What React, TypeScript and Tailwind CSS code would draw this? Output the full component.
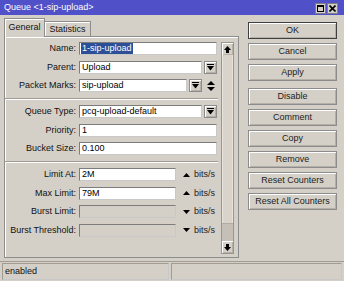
import React from "react";

const DropIcon = () => (
  <svg width="7" height="7" viewBox="0 0 7 7">
    <rect x="0" y="0" width="7" height="1" fill="#000" />
    <polygon points="0,2 7,2 3.5,6.5" fill="#000" />
  </svg>
);

const UpDown = () => (
  <svg width="8" height="10" viewBox="0 0 8 10">
    <polygon points="4,0 8,4 0,4" fill="#000" />
    <polygon points="0,6 8,6 4,10" fill="#000" />
  </svg>
);

const Tri = ({ up }: { up: boolean }) => (
  <svg width="7" height="4" viewBox="0 0 7 4">
    {up ? <polygon points="3.5,0 7,4 0,4" fill="#000" /> : <polygon points="0,0 7,0 3.5,4" fill="#000" />}
  </svg>
);

const ScrollArrow = ({ up }: { up: boolean }) => (
  <svg width="7" height="7" viewBox="0 0 7 7">
    {up ? (
      <>
        <polygon points="3.5,0 7,4 0,4" fill="#000" />
        <rect x="2" y="4" width="3" height="3" fill="#000" />
      </>
    ) : (
      <>
        <rect x="2" y="0" width="3" height="3" fill="#000" />
        <polygon points="0,3 7,3 3.5,7" fill="#000" />
      </>
    )}
  </svg>
);

const raised =
  "border border-[#8c8c8c] shadow-[inset_1px_1px_0_#ffffff,inset_-1px_-1px_0_#b4b0a8] bg-[#d4d0c8]";
const sunken =
  "border border-t-[#7c7c7c] border-l-[#7c7c7c] border-b-[#c8c8c8] border-r-[#c8c8c8]";

const Label = ({ text }: { text: string }) => (
  <div className="w-[72px] shrink-0 text-right pr-[1px] leading-[13px] text-[#111]">{text}</div>
);

const Input = ({ value, w, disabled }: { value?: string; w: string; disabled?: boolean }) => (
  <div className={`${w} h-[13px] ${sunken} ${disabled ? "bg-[#d4d0c8]" : "bg-white"} pl-[2px] leading-[11px] text-black`}>
    {value}
  </div>
);

const DropBtn = () => (
  <div className={`w-[13px] h-[13px] ${raised} flex items-center justify-center`}>
    <DropIcon />
  </div>
);

const Sep = () => <div className="h-[2px] border-t border-[#a09c94] border-b border-b-white mr-[3px]" />;

const Button = ({ text, primary }: { text: string; primary?: boolean }) => (
  <div
    className={`h-[17px] w-[89px] flex items-center justify-center border ${
      primary ? "border-[#404040]" : "border-[#8c8c8c]"
    } shadow-[inset_1px_1px_0_#ffffff,inset_-1px_-1px_0_#b4b0a8] text-[#222]`}
  >
    {text}
  </div>
);

export default function App() {
  return (
    <div className="w-[344px] h-[281px] bg-[#d4d0c8] flex flex-col overflow-hidden font-['Liberation_Sans',Arial,sans-serif] text-[9px]">
      <div className="h-[15px] shrink-0 bg-[#5050c8] flex items-center justify-between pl-[4px] pr-[6px] text-white">
        <span>Queue &lt;1-sip-upload&gt;</span>
        <div className="flex gap-[1px] pt-[1px]">
          <div className="w-[11px] h-[11px] bg-[#d4d0c8] border border-[#808080] flex items-center justify-center">
            <div className="w-[7px] h-[7px] border border-black border-t-2" />
          </div>
          <div className="w-[11px] h-[11px] bg-[#d4d0c8] border border-[#808080] flex items-center justify-center">
            <svg width="7" height="7" viewBox="0 0 7 7">
              <path d="M0.5 0.5 L6.5 6.5 M6.5 0.5 L0.5 6.5" stroke="#000" strokeWidth="1.6" />
            </svg>
          </div>
        </div>
      </div>

      <div className="flex flex-1 min-h-0">
        <div className="w-[239px] pl-[4px] pt-[3px] flex flex-col">
          <div className="flex items-end h-[19px]">
            <div className="w-[41px] h-[19px] border border-b-0 border-[#8c8c8c] shadow-[inset_1px_1px_0_#ffffff] flex items-center justify-center text-[#111] relative z-10 bg-[#d4d0c8]">
              General
            </div>
            <div className="w-[46px] h-[16px] border border-b-0 border-l-0 border-[#8c8c8c] shadow-[inset_1px_1px_0_#ffffff] flex items-center justify-center text-[#111]">
              Statistics
            </div>
          </div>
          <div className="w-[235px] h-[222px] -mt-[1px] border border-[#8c8c8c] shadow-[inset_1px_1px_0_#ffffff] flex pt-[5px] pb-[3px]">
            <div className="flex-1 flex flex-col gap-[5.5px]">
              <div className="flex items-center gap-[2px]">
                <Label text="Name:" />
                <div className={`w-[138px] h-[13px] ${sunken} bg-white pl-[1px] flex items-center`}>
                  <span className="bg-[#2c4f97] text-white leading-[11px] px-[1px]">1-sip-upload</span>
                </div>
              </div>
              <div className="flex items-center gap-[2px]">
                <Label text="Parent:" />
                <Input value="Upload" w="w-[123px]" />
                <DropBtn />
              </div>
              <div className="flex items-center gap-[2px]">
                <Label text="Packet Marks:" />
                <Input value="sip-upload" w="w-[108px]" />
                <DropBtn />
                <div className="ml-[3px] flex items-center">
                  <UpDown />
                </div>
              </div>
              <Sep />
              <div className="flex items-center gap-[2px]">
                <Label text="Queue Type:" />
                <Input value="pcq-upload-default" w="w-[123px]" />
                <DropBtn />
              </div>
              <div className="flex items-center gap-[2px]">
                <Label text="Priority:" />
                <Input value="1" w="w-[138px]" />
              </div>
              <div className="flex items-center gap-[2px]">
                <Label text="Bucket Size:" />
                <Input value="0.100" w="w-[138px]" />
              </div>
              <Sep />
              {[
                { l: "Limit At:", v: "2M", up: true, d: false },
                { l: "Max Limit:", v: "79M", up: true, d: false },
                { l: "Burst Limit:", v: "", up: false, d: true },
                { l: "Burst Threshold:", v: "", up: false, d: true },
              ].map((r) => (
                <div key={r.l} className="flex items-center gap-[2px]">
                  <Label text={r.l} />
                  <Input value={r.v} w="w-[97px]" disabled={r.d} />
                  <div className="ml-[5px] mr-[2px] flex items-center">
                    <Tri up={r.up} />
                  </div>
                  <span className="text-[#222] leading-[13px]">bits/s</span>
                </div>
              ))}
            </div>
            <div className="w-[13px] mr-[4px] flex flex-col border border-[#9a968e] bg-[#d8d4cc]">
              <div className={`h-[12px] ${raised} border-0 flex items-center justify-center`}>
                <ScrollArrow up />
              </div>
              <div className="flex-1 border-x border-[#e8e4dc]" />
              <div className="h-[18px] bg-[#c4c0b8] border-t border-[#b0aca4]" />
              <div className={`h-[12px] ${raised} border-0 flex items-center justify-center`}>
                <ScrollArrow up={false} />
              </div>
            </div>
          </div>
        </div>

        <div className="flex-1 pl-[9px] pt-[7px] flex flex-col gap-[4px]">
          <Button text="OK" primary />
          <Button text="Cancel" />
          <Button text="Apply" />
          <div className="mt-[3px]">
            <Button text="Disable" />
          </div>
          <Button text="Comment" />
          <Button text="Copy" />
          <Button text="Remove" />
          <Button text="Reset Counters" />
          <Button text="Reset All Counters" />
        </div>
      </div>

      <div className="h-[20px] shrink-0 flex gap-[2px] px-[2px] pt-[1px] pb-[1px] border-t border-[#a09c94]">
        <div className={`w-[167px] ${sunken} border-t-[#a09c94] border-l-[#a09c94] pl-[2px] flex items-center text-[#111]`}>
          enabled
        </div>
        <div className={`flex-1 ${sunken} border-t-[#a09c94] border-l-[#a09c94]`} />
      </div>
    </div>
  );
}
